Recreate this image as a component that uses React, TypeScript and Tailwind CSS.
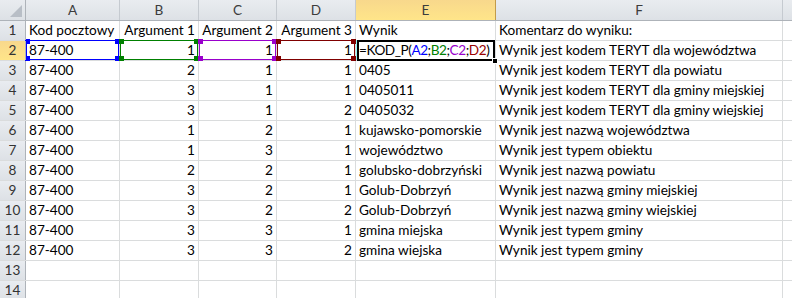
import React from 'react';

type Row = [string, string, string, string, string, string];

const rows: Row[] = [
  ['Kod pocztowy', 'Argument 1', 'Argument 2', 'Argument 3', 'Wynik', 'Komentarz do wyniku:'],
  ['87-400', '1', '1', '1', '', 'Wynik jest kodem TERYT dla województwa'],
  ['87-400', '2', '1', '1', '0405', 'Wynik jest kodem TERYT dla powiatu'],
  ['87-400', '3', '1', '1', '0405011', 'Wynik jest kodem TERYT dla gminy miejskiej'],
  ['87-400', '3', '1', '2', '0405032', 'Wynik jest kodem TERYT dla gminy wiejskiej'],
  ['87-400', '1', '2', '1', 'kujawsko-pomorskie', 'Wynik jest nazwą województwa'],
  ['87-400', '1', '3', '1', 'województwo', 'Wynik jest typem obiektu'],
  ['87-400', '2', '2', '1', 'golubsko-dobrzyński', 'Wynik jest nazwą powiatu'],
  ['87-400', '3', '2', '1', 'Golub-Dobrzyń', 'Wynik jest nazwą gminy miejskiej'],
  ['87-400', '3', '2', '2', 'Golub-Dobrzyń', 'Wynik jest nazwą gminy wiejskiej'],
  ['87-400', '3', '3', '1', 'gmina miejska', 'Wynik jest typem gminy'],
  ['87-400', '3', '3', '2', 'gmina wiejska', 'Wynik jest typem gminy'],
  ['', '', '', '', '', ''],
  ['', '', '', '', '', ''],
];

const widths = ['w-[94px]', 'w-[79px]', 'w-[78px]', 'w-[79px]', 'w-[140px]', 'w-[287px]'];
const letters = ['A', 'B', 'C', 'D', 'E', 'F'];

const cell = 'relative shrink-0 h-full border-r border-[#dadcdd] px-[3px] whitespace-nowrap';
const grayHead = 'bg-gradient-to-b from-[#e9ecf0] to-[#dde1e6]';
const orangeHead = 'bg-gradient-to-b from-[#f8d88c] to-[#ffe589]';

function Corners({ color }: { color: string }) {
  return (
    <>
      <div className={`absolute -left-[2px] -top-[2px] w-[5px] h-[5px] ${color}`} />
      <div className={`absolute -right-[2px] -top-[2px] w-[5px] h-[5px] ${color}`} />
      <div className={`absolute -left-[2px] -bottom-[2px] w-[5px] h-[5px] ${color}`} />
      <div className={`absolute -right-[2px] -bottom-[2px] w-[5px] h-[5px] ${color}`} />
    </>
  );
}

function RangeBox({ border, fill }: { border: string; fill: string }) {
  return (
    <div className={`absolute -top-px left-0 right-0 bottom-0 z-10 border ${border}`}>
      <Corners color={fill} />
    </div>
  );
}

function Formula() {
  return (
    <span className="tracking-[-0.45px]">
      =KOD_P(<span className="text-[#0000ff]">A2</span>;<span className="text-[#008000]">B2</span>;
      <span className="text-[#9900cc]">C2</span>;<span className="text-[#990000]">D2</span>)
    </span>
  );
}

export default function App() {
  return (
    <div
      className="h-[298px] w-[792px] overflow-hidden bg-white text-[13.6px] text-black"
      style={{ fontFamily: 'Lato, "Liberation Sans", sans-serif' }}
    >
      {/* column headers */}
      <div className="flex h-[21px] border-b border-[#aeb3b9]">
        <div className={`relative shrink-0 w-[26px] h-full border-r border-[#aeb3b9] ${grayHead}`}>
          <svg className="absolute right-[3px] bottom-[3px]" width="12" height="12" viewBox="0 0 12 12">
            <polygon points="12,0 12,12 0,12" fill="#b8bec6" />
          </svg>
        </div>
        {letters.map((l, i) => (
          <div
            key={l}
            className={`shrink-0 h-full flex items-center justify-center border-r text-[#3c3c3c] ${widths[i]} ${
              l === 'E' ? `${orangeHead} border-[#c29b4a]` : `${grayHead} border-[#c5cad0]`
            }`}
          >
            {l}
          </div>
        ))}
        <div className={`flex-1 h-full ${grayHead}`} />
      </div>

      {rows.map((r, ri) => {
        const n = ri + 1;
        const sel = n === 2;
        return (
          <div key={n} className="flex h-[20px] border-b border-[#dadcdd] leading-[19px]">
            <div
              className={`relative z-20 shrink-0 w-[26px] h-full flex items-center justify-center border-r border-[#aeb3b9] text-[#333] ${
                sel ? orangeHead : grayHead
              }`}
            >
              {n}
            </div>
            <div className={`${cell} ${widths[0]}`}>
              {r[0]}
              {sel && <RangeBox border="border-[#0000ff]" fill="bg-[#0000ff]" />}
            </div>
            <div className={`${cell} ${widths[1]} text-right`}>
              {r[1]}
              {sel && <RangeBox border="border-[#008000]" fill="bg-[#008000]" />}
            </div>
            <div className={`${cell} ${widths[2]} text-right`}>
              {r[2]}
              {sel && <RangeBox border="border-[#9900cc]" fill="bg-[#9900cc]" />}
            </div>
            <div className={`${cell} ${widths[3]} text-right`}>
              {r[3]}
              {sel && <RangeBox border="border-[#800000]" fill="bg-[#800000]" />}
            </div>
            <div className={`${cell} ${widths[4]}`}>
              {sel ? <Formula /> : r[4]}
              {sel && (
                <>
                  <div className="absolute -top-px left-0 w-px bottom-0 z-10 bg-[#8ff4f4]" />
                  <div className="absolute -top-px left-px right-0 -bottom-px z-10 border-2 border-black" />
                  <div className="absolute -right-[3px] -bottom-[4px] z-20 w-[6px] h-[6px] bg-black border border-white" />
                </>
              )}
            </div>
            <div className={`${cell} ${widths[5]}`}>{r[5]}</div>
            <div className="flex-1 h-full" />
          </div>
        );
      })}
    </div>
  );
}
